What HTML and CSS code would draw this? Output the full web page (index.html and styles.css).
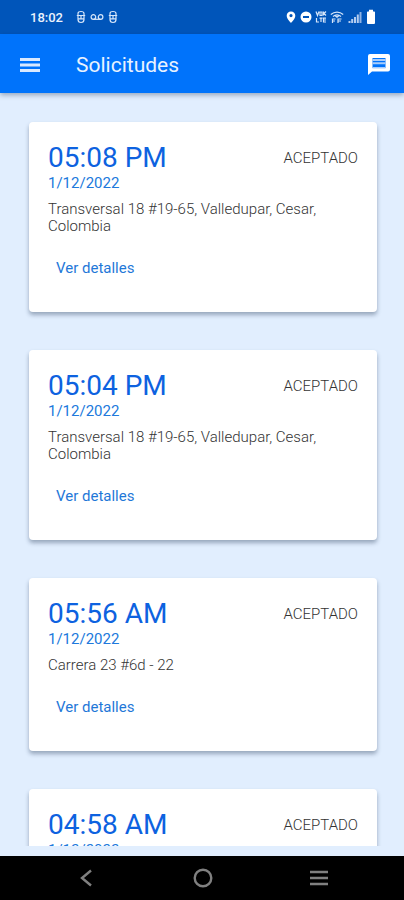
FILE: index.html
```html
<!DOCTYPE html>
<html lang="es">
<head>
<meta charset="utf-8">
<meta name="viewport" content="width=device-width, initial-scale=1">
<title>Solicitudes</title>
<link rel="stylesheet" href="styles.css">
</head>
<body>
<div class="status">
  <span class="clock">18:02</span>
  <div class="notices">
    <svg width="10" height="14" viewBox="0 0 10 14" class="line"><path d="M2 5V3.500Q2 1.500 5 1.500T8 3.500V5M.8 5.500h8.400M2 6v3.500Q2 12.500 5 12.500T8 9.500V6M2.500 8.800h5M5 5.500v3"/></svg>
    <svg width="14" height="14" viewBox="0 0 14 14" class="line"><circle cx="3.4" cy="7" r="2.3"/><circle cx="10.6" cy="7" r="2.3"/><path d="M3.4 9.3h7.2"/></svg>
    <svg width="10" height="14" viewBox="0 0 10 14" class="line"><path d="M2 5V3.500Q2 1.500 5 1.500T8 3.500V5M.8 5.500h8.400M2 6v3.500Q2 12.500 5 12.500T8 9.500V6M2.500 8.800h5M5 5.500v3"/></svg>
  </div>
  <div class="signals">
    <svg width="10" height="14" viewBox="0 0 10 14" class="solid"><path fill-rule="evenodd" d="M5 1.500C2.500 1.500 .7 3.300.7 5.700.7 8.800 5 13 5 13s4.300-4.200 4.300-7.300C9.300 3.300 7.500 1.500 5 1.500zM5 4a1.600 1.600 0 1 1 0 3.200A1.600 1.600 0 0 1 5 4z"/></svg>
    <svg width="12" height="14" viewBox="0 0 12 14" class="solid"><path fill-rule="evenodd" d="M6 1.500a5.500 5.500 0 1 0 0 11 5.500 5.500 0 0 0 0-11zM3 6v2h6V6z"/></svg>
    <svg width="12" height="14" viewBox="0 0 12 14" class="line"><path d="M1 1.500l1.500 4L4 1.500M5 2h2v3.500H5zM8.500 1.500v4M11 1.500L9 3.500l2 2M1.500 8v4H4M4.500 8.200h3M6 8v4M11 8.200H8.500V12H11M8.500 10H11"/></svg>
    <svg width="14" height="14" viewBox="0 0 14 14" class="line"><path d="M.8 4.500C4.500 1.300 9.500 1.300 13.200 4.500M3 6.500c2.500-2 5.500-2 8 0M5 5.500l2 1.800 2-1.800M2.500 13V9h3M2.500 11h2.500M8 13V9h3.500M8 11h3"/></svg>
    <svg width="16" height="14" viewBox="0 0 16 14" class="bars"><path d="M1.500 11h2v2h-2zM4.200 9h2v4h-2zM7 7h2v6H7zM9.800 4.500h2V13h-2z"/><path class="dim" d="M12.500 2h2v11h-2z"/></svg>
    <svg width="10" height="16" viewBox="0 0 10 16" class="solid"><path d="M3 .8h4v1.700h1.200q.8 0 .8.800V14q0 1-1 1H2q-1 0-1-1V3.300q0-.8.800-.8H3z"/></svg>
  </div>
</div>
<header class="appbar">
  <button class="icon" aria-label="Menú"><svg width="20" height="16" viewBox="0 0 20 16" class="solid"><path d="M0 1h20v3H0zM0 6.500h20v3H0zM0 12h20v3H0z"/></svg></button>
  <h1>Solicitudes</h1>
  <button class="icon" aria-label="Mensajes"><svg width="24" height="24" viewBox="0 0 24 24" class="solid"><path fill-rule="evenodd" d="M3 1h18q2 0 2 2v13.500q0 2-2 2H5L1 22V3q0-2 2-2zM5.500 5v10h13V5z"/><path class="rows" d="M5.500 6h13v2h-13zM5.500 9.200h13v2h-13zM5.500 14h13v1.500h-13z"/></svg></button>
</header>
<main class="list">
  <article class="card">
    <div class="top"><h2>05:08 PM</h2><span class="state">ACEPTADO</span></div>
    <time>1/12/2022</time>
    <p>Transversal 18 #19-65, Valledupar, Cesar, Colombia</p>
    <button class="details">Ver detalles</button>
  </article>
  <article class="card">
    <div class="top"><h2>05:04 PM</h2><span class="state">ACEPTADO</span></div>
    <time>1/12/2022</time>
    <p>Transversal 18 #19-65, Valledupar, Cesar, Colombia</p>
    <button class="details">Ver detalles</button>
  </article>
  <article class="card">
    <div class="top"><h2>05:56 AM</h2><span class="state">ACEPTADO</span></div>
    <time>1/12/2022</time>
    <p>Carrera 23 #6d - 22</p>
    <button class="details">Ver detalles</button>
  </article>
  <article class="card">
    <div class="top"><h2>04:58 AM</h2><span class="state">ACEPTADO</span></div>
    <time>1/12/2022</time>
  </article>
</main>
<nav class="system">
  <button aria-label="Atrás"><svg width="24" height="24" viewBox="0 0 24 24"><path d="M16 4.500L7 12l9 7.500"/></svg></button>
  <button aria-label="Inicio"><svg width="24" height="24" viewBox="0 0 24 24"><circle cx="12" cy="12" r="8.300"/></svg></button>
  <button aria-label="Recientes"><svg width="24" height="24" viewBox="0 0 24 24"><path d="M3 6h18M3 12h18M3 18h18"/></svg></button>
</nav>
</body>
</html>
```
FILE: styles.css
```css
* { box-sizing: border-box; }
body {
  margin: 0;
  height: 100vh;
  display: flex;
  flex-direction: column;
  overflow: hidden;
  background: #e1eefe;
  color: #333;
  font-family: Roboto, sans-serif;
}
h1, h2, p { margin: 0; font-weight: 400; }
button {
  border: 0;
  padding: 0;
  background: none;
  color: inherit;
  font: inherit;
}
svg { display: block; }
.line { fill: none; stroke: #d6e6fa; stroke-width: 1.2; }
.solid { fill: #fff; }
.bars { fill: #b4cdf0; }
.dim { fill: #8fb3e4; }
.rows { fill: #a9cdfb; }

.status {
  height: 34px;
  flex: none;
  display: flex;
  align-items: center;
  padding: 0 28px 0 30px;
  background: #0055ba;
  color: #eaf2fd;
}
.clock { font-size: 13px; font-weight: 500; }
.notices { display: flex; gap: 4px; margin-left: 13px; align-items: center; }
.notices svg { flex: none; }
.signals { display: flex; gap: 4px; margin-left: auto; align-items: center; }
.signals svg:nth-child(n+3) { margin-left: -1px; }

.appbar {
  height: 59px;
  flex: none;
  display: flex;
  align-items: center;
  padding: 2px 13px 0 20px;
  background: #0073fb;
  color: #e8f2ff;
  box-shadow: 0 2px 5px rgba(0, 30, 70, .35);
  position: relative;
}
.appbar h1 { flex: 1; margin-left: 36px; font-size: 21px; line-height: 28px; }
.appbar .icon:first-child .solid { fill: #d9e9ff; }

.list {
  flex: 1;
  min-height: 0;
  overflow: hidden;
  padding: 29px 27px 0 29px;
  margin-bottom: 10px;
  display: flex;
  flex-direction: column;
  gap: 38px;
}
.card {
  flex: none;
  padding: 19px 19px 27px;
  background: #fff;
  border-radius: 4px;
  box-shadow: 0 3px 4px rgba(40, 60, 90, .4);
}
.top { display: flex; justify-content: space-between; align-items: center; }
h2 { font-size: 28px; line-height: 33px; color: #0d62e0; }
.state { font-size: 15px; font-weight: 300; }
time { display: block; font-size: 15px; line-height: 18px; color: #2079dc; }
p { margin-top: 9px; font-size: 15px; line-height: 17px; font-weight: 300; }
.details {
  display: block;
  margin-top: 16px;
  padding: 0 8px;
  font-size: 15px;
  line-height: 34px;
  color: #1f78d8;
}

.system {
  height: 44px;
  flex: none;
  display: flex;
  align-items: center;
  justify-content: space-between;
  padding: 0 73px 0 75px;
  background: #000;
}
.system svg { fill: none; stroke: #808080; stroke-width: 2.4; }
```
